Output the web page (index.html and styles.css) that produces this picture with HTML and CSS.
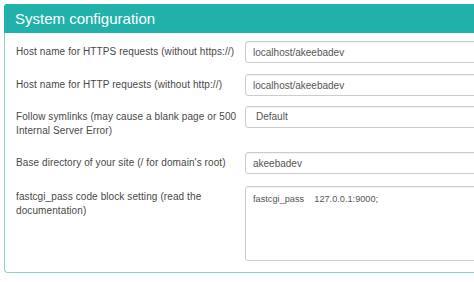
FILE: index.html
```html
<!DOCTYPE html>
<html>
<head>
<meta charset="utf-8">
<link rel="stylesheet" href="styles.css">
</head>
<body>
<div class="panel">
  <div class="panel-heading">System configuration</div>
  <div class="panel-body">
    <div class="row">
      <label class="label">Host name for HTTPS requests (without https://)</label>
      <div class="field"><input class="input" type="text" value="localhost/akeebadev"></div>
    </div>
    <div class="row">
      <label class="label">Host name for HTTP requests (without http://)</label>
      <div class="field"><input class="input" type="text" value="localhost/akeebadev"></div>
    </div>
    <div class="row">
      <label class="label">Follow symlinks (may cause a blank page or 500 Internal Server Error)</label>
      <div class="field"><div class="select">Default</div></div>
    </div>
    <div class="row">
      <label class="label">Base directory of your site (/ for domain's root)</label>
      <div class="field"><input class="input" type="text" value="akeebadev"></div>
    </div>
    <div class="row row-textarea">
      <label class="label">fastcgi_pass code block setting (read the documentation)</label>
      <div class="field"><textarea class="textarea">fastcgi_pass    127.0.0.1:9000;</textarea></div>
    </div>
  </div>
</div>
</body>
</html>
```
FILE: styles.css
```css
html, body {
  margin: 0;
  padding: 0;
  overflow: hidden;
  background: #ffffff;
}
body {
  padding: 4px 0 0 4px;
  font-family: "Liberation Sans", Arial, sans-serif;
  width: 560px;
}
.panel {
  width: 540px;
  border: 1px solid #8ad4cf;
  border-top: none;
  border-radius: 4px;
  background: #fff;
}
.panel-heading {
  background: #20b2aa;
  color: #ffffff;
  font-size: 15px;
  height: 29px;
  line-height: 30px;
  padding-left: 11px;
  margin: 0 -1px;
  border-radius: 3px 3px 0 0;
}
.panel-body {
  padding: 8px 11px 11px 11px;
  display: flex;
  flex-direction: column;
  gap: 10px;
}
.row {
  display: flex;
  align-items: flex-start;
}
.row + .row {
  margin-top: 1px;
}
.row + .row + .row {
  margin-top: 0;
}
.row-textarea {
  margin-top: 2px;
}
.row + .row + .row.row-textarea {
  margin-top: 2px;
}
.label {
  width: 229px;
  flex: none;
  font-size: 10px;
  letter-spacing: 0.1px;
  line-height: 14px;
  color: #484848;
  padding: 4px 0;
}
.field {
  flex: 1;
}
.input, .select, .textarea {
  display: block;
  box-sizing: border-box;
  width: 100%;
  height: 22px;
  border: 1px solid #cccccc;
  border-radius: 3px;
  padding: 0 7px;
  font-family: "Liberation Sans", Arial, sans-serif;
  font-size: 10px;
  color: #555555;
  background: #fff;
  box-shadow: inset 0 1px 1px rgba(0,0,0,0.06);
  margin: 0;
}
.select {
  line-height: 20px;
  padding-left: 10px;
}
.textarea {
  height: 75px;
  padding: 6px 7px;
  font-size: 9.2px;
  line-height: 12px;
  resize: none;
  white-space: pre;
}
```
